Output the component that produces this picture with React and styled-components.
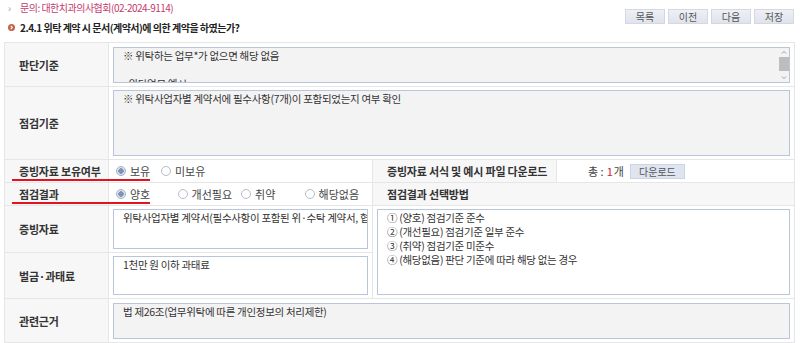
import styled, { createGlobalStyle } from "styled-components";

const GlobalStyle = createGlobalStyle`
  html, body {
    margin: 0;
    padding: 0;
    background: #ffffff;
  }
  body {
    font-family: "Noto Sans CJK KR", "Noto Sans", sans-serif;
    font-size: 11px;
    color: #333333;
  }
`;

const radioRows = {
  have: [
    { label: "보유", checked: true, width: 45 },
    { label: "미보유", checked: false, width: 60 },
  ],
  result: [
    { label: "양호", checked: true, width: 62 },
    { label: "개선필요", checked: false, width: 64 },
    { label: "취약", checked: false, width: 64 },
    { label: "해당없음", checked: false, width: 64 },
  ],
};

const guideLines = [
  "① (양호) 점검기준 준수",
  "② (개선필요) 점검기준 일부 준수",
  "③ (취약) 점검기준 미준수",
  "④ (해당없음) 판단 기준에 따라 해당 없는 경우",
];

function ScrollArea(props) {
  return (
    <AreaBox>
      <Area {...props} />
      <ScrollTrack>
        <ArrowIcon viewBox="0 0 10 9">
          <path d="M3 5.5 L5 3.5 L7 5.5" stroke="#999" strokeWidth="1" fill="none" />
        </ArrowIcon>
        <Thumb />
        <ArrowIcon viewBox="0 0 10 9">
          <path d="M3 3.5 L5 5.5 L7 3.5" stroke="#999" strokeWidth="1" fill="none" />
        </ArrowIcon>
      </ScrollTrack>
    </AreaBox>
  );
}

export default function App() {
  return (
    <>
      <GlobalStyle />
      <Page>
        <TopBar>
          <Heading>
            <Contact>
              <Chevron>›</Chevron>
              문의: 대한치과의사협회(02-2024-9114)
            </Contact>
            <Title>
              <TitleIcon viewBox="0 0 8 8">
                <circle cx="4" cy="4" r="4" fill="#c8604a" />
                <path d="M3.1 2.2 L5 4 L3.1 5.8" stroke="#fff" strokeWidth="1.2" fill="none" />
              </TitleIcon>
              <span>2.4.1 위탁 계약 시 문서(계약서)에 의한 계약을 하였는가?</span>
            </Title>
          </Heading>
          <Buttons>
            <TopButton>목록</TopButton>
            <TopButton>이전</TopButton>
            <TopButton>다음</TopButton>
            <TopButton>저장</TopButton>
          </Buttons>
        </TopBar>

        <TableWrap>
          <Table>
            <colgroup>
              <col style={{ width: 104 }} />
              <col style={{ width: 264 }} />
              <col style={{ width: 184 }} />
              <col />
            </colgroup>
            <tbody>
              <Row height={44}>
                <Label>판단기준</Label>
                <Cell colSpan={3}>
                  <ScrollArea
                    readOnly
                    height={36}
                    defaultValue={"※ 위탁하는 업무*가 없으면 해당 없음\n\n• 위탁업무 예시\n - 개인정보 처리 업무\n - 홈페이지 관리 업무\n - 고객 상담 업무"}
                  />
                </Cell>
              </Row>
              <Row height={73}>
                <Label>점검기준</Label>
                <Cell colSpan={3}>
                  <Area
                    readOnly
                    height={66}
                    defaultValue="※ 위탁사업자별 계약서에 필수사항(7개)이 포함되었는지 여부 확인"
                  />
                </Cell>
              </Row>
              <Row height={23}>
                <Label>증빙자료 보유여부</Label>
                <Cell>
                  <RadioGroup>
                    {radioRows.have.map((r) => (
                      <RadioItem key={r.label} width={r.width}>
                        <Radio checked={r.checked} />
                        {r.label}
                      </RadioItem>
                    ))}
                  </RadioGroup>
                </Cell>
                <Label>증빙자료 서식 및 예시 파일 다운로드</Label>
                <Cell>
                  <Download>
                    총 : <Count>1</Count>개
                    <DownButton>다운로드</DownButton>
                  </Download>
                </Cell>
              </Row>
              <Row height={23}>
                <Label>점검결과</Label>
                <Cell>
                  <RadioGroup>
                    {radioRows.result.map((r) => (
                      <RadioItem key={r.label} width={r.width}>
                        <Radio checked={r.checked} />
                        {r.label}
                      </RadioItem>
                    ))}
                  </RadioGroup>
                </Cell>
                <Label colSpan={2}>점검결과 선택방법</Label>
              </Row>
              <Row height={47}>
                <Label>증빙자료</Label>
                <Cell>
                  <Area
                    white
                    wrap="off"
                    height={40}
                    defaultValue="위탁사업자별 계약서(필수사항이 포함된 위·수탁 계약서, 협약서 등)"
                  />
                </Cell>
                <Cell colSpan={2} rowSpan={2}>
                  <Area white readOnly height={86} defaultValue={guideLines.join("\n")} />
                </Cell>
              </Row>
              <Row height={46}>
                <Label>벌금·과태료</Label>
                <Cell>
                  <Area white height={39} defaultValue="1천만 원 이하 과태료" />
                </Cell>
              </Row>
              <Row height={44}>
                <Label>관련근거</Label>
                <Cell colSpan={3}>
                  <Area
                    readOnly
                    height={36}
                    defaultValue="법 제26조(업무위탁에 따른 개인정보의 처리제한)"
                  />
                </Cell>
              </Row>
            </tbody>
          </Table>
          <Underline top={137} />
          <Underline top={160} />
        </TableWrap>
      </Page>
    </>
  );
}

const Page = styled.div`
  width: 800px;
  height: 343px;
  overflow: hidden;
`;

const TopBar = styled.div`
  display: flex;
  justify-content: space-between;
  align-items: flex-start;
  height: 42px;
`;

const Heading = styled.div`
  display: flex;
  flex-direction: column;
  padding-left: 8px;
`;

const Contact = styled.div`
  display: flex;
  align-items: center;
  color: #c4396d;
  font-size: 10px;
  height: 15px;
  letter-spacing: -0.5px;
`;

const Chevron = styled.span`
  color: #999;
  font-size: 10px;
  width: 12px;
`;

const Title = styled.div`
  display: flex;
  align-items: center;
  gap: 5px;
  margin-top: 3px;
  font-weight: 700;
  font-size: 10px;
  letter-spacing: -0.5px;
  color: #222;
  height: 18px;
  white-space: nowrap;
`;

const TitleIcon = styled.svg`
  width: 7px;
  height: 7px;
  flex: none;
`;

const Buttons = styled.div`
  display: flex;
  gap: 3px;
  padding: 9px 6px 0 0;
`;

const TopButton = styled.button`
  width: 40px;
  height: 15px;
  padding: 0;
  border: 1px solid #d4d8e2;
  background: linear-gradient(#eef0f5, #dfe3ec);
  color: #555;
  font-family: inherit;
  font-size: 10px;
  line-height: 13px;
`;

const TableWrap = styled.div`
  position: relative;
  margin: 0 5px 0 4px;
`;

const Table = styled.table`
  width: 100%;
  border-collapse: collapse;
  table-layout: fixed;
  border: 1px solid #e2e2e2;
`;

const Row = styled.tr`
  height: ${(p) => p.height}px;
`;

const Label = styled.td`
  background: #f7f7f7;
  border: 1px solid #e6e6e6;
  padding: 0 0 0 14px;
  font-weight: 700;
  color: #333;
  white-space: nowrap;
  letter-spacing: -0.2px;
`;

const Cell = styled.td`
  border: 1px solid #e6e6e6;
  padding: 3px 4px;
  vertical-align: middle;
  background: #fff;
`;

const AreaBox = styled.div`
  position: relative;
`;

const Area = styled.textarea`
  display: block;
  box-sizing: border-box;
  width: 100%;
  height: ${(p) => p.height}px;
  margin: 0;
  padding: 1px 9px;
  border: 1px solid #b9c5da;
  background: ${(p) => (p.white ? "#ffffff" : "#f3f3f3")};
  font-family: "Noto Sans CJK KR", "Noto Sans", sans-serif;
  font-size: 10.5px;
  line-height: 14px;
  color: #333;
  resize: none;
  overflow: hidden;
  letter-spacing: -0.3px;
  outline: none;
`;

const ScrollTrack = styled.div`
  position: absolute;
  top: 1px;
  right: 1px;
  bottom: 1px;
  width: 10px;
  display: flex;
  flex-direction: column;
  background: #f3f3f3;
`;

const ArrowIcon = styled.svg`
  width: 10px;
  height: 9px;
  flex: none;
  &:last-child {
    margin-top: auto;
  }
`;

const Thumb = styled.div`
  height: 14px;
  background: #bdbdbd;
`;

const RadioGroup = styled.div`
  display: flex;
  align-items: center;
  padding-left: 3px;
`;

const RadioItem = styled.label`
  display: flex;
  align-items: center;
  gap: 4px;
  width: ${(p) => p.width}px;
  color: #444;
`;

const Radio = styled.span`
  box-sizing: border-box;
  width: 10px;
  height: 10px;
  border-radius: 50%;
  border: 1px solid ${(p) => (p.checked ? "#a7b1c4" : "#b5bdcc")};
  background: ${(p) =>
    p.checked ? "radial-gradient(circle, #7f92b8 0 2.5px, #dfe4ee 3px)" : "#fff"};
`;

const Download = styled.div`
  display: flex;
  align-items: center;
  padding-left: 27px;
  color: #444;
`;

const Count = styled.span`
  color: #d0203a;
  margin: 0 1px 0 3px;
`;

const DownButton = styled.button`
  margin-left: 6px;
  width: 55px;
  height: 15px;
  padding: 0;
  border: 1px solid #cdd4e4;
  background: #dfe4f1;
  color: #555;
  font-family: inherit;
  font-size: 10px;
  line-height: 13px;
`;

const Underline = styled.div`
  position: absolute;
  left: 8px;
  top: ${(p) => p.top}px;
  width: 138px;
  height: 2px;
  background: #e0141e;
`;
